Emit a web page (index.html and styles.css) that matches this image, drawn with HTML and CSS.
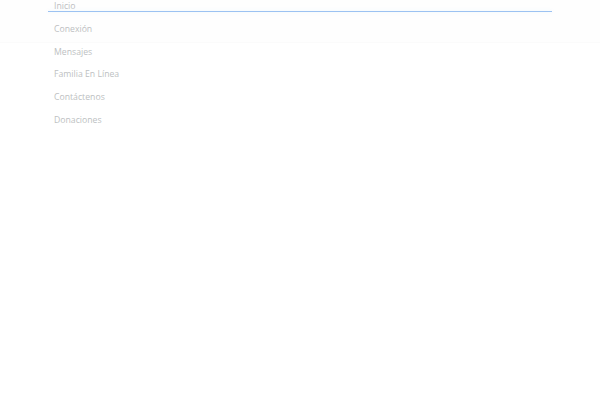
FILE: index.html
```html
<!DOCTYPE html>
<html lang="es">
<head>
    <meta charset="UTF-8">
    <meta name="viewport" content="width=device-width, initial-scale=1.0">
    <title>Menú</title>
    <link rel="stylesheet" href="styles.css">
</head>
<body>

    <header class="header">
        <div class="nav-line"></div>
        <nav class="mobile-nav">
            <ul class="menu">
                <li><a href="#">Inicio</a></li>
                <li><a href="#">Conexión</a></li>
                <li><a href="#">Mensajes</a></li>
                <li><a href="#">Familia En Línea</a></li>
                <li><a href="#">Contáctenos</a></li>
                <li><a href="#">Donaciones</a></li>
            </ul>
        </nav>
    </header>

</body>
</html>
```

FILE: styles.css
```css
body {
    margin: 0;
    font-family: "Open Sans", Arial, sans-serif;
    background: #fff;
    height: 400px;
    overflow: hidden;
}

.header {
    position: relative;
    display: flow-root;
}

.header::before {
    content: "";
    position: absolute;
    left: 0;
    right: 0;
    top: 0;
    height: 42px;
    background: #fefefe;
    border-bottom: 1px solid #fbfbfb;
}

.nav-line {
    position: absolute;
    top: 11px;
    left: 48px;
    width: 504px;
    height: 1px;
    background: #9cc2f2;
    box-shadow: 0 0 4px rgba(46, 163, 242, 0.12);
    z-index: 2;
}

.mobile-nav {
    position: relative;
    width: 504px;
    margin: 0 auto;
    z-index: 1;
}

.menu {
    list-style: none;
    margin: -5px 0 0;
    padding: 0;
}

.menu a {
    display: block;
    padding: 0 6px;
    line-height: 22.8px;
    font-size: 8.7px;
    color: #bdbfc2;
    text-decoration: none;
}
```
